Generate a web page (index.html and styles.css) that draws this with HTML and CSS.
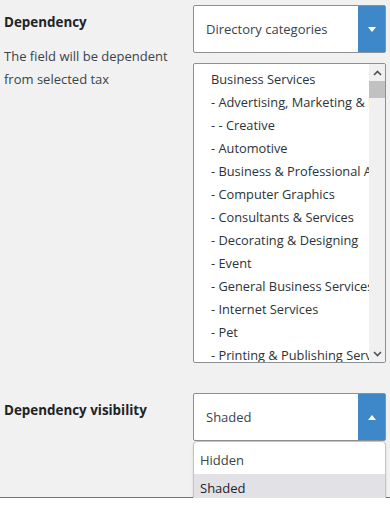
FILE: index.html
```html
<!DOCTYPE html>
<html lang="en">
<head>
    <meta charset="UTF-8" />
    <meta name="viewport" content="width=device-width, initial-scale=1.0"/>
    <title>Field Dependency</title>
    <link rel="stylesheet" href="styles.css">
</head>
<body>
<div class="panel">
    <div class="row">
        <div class="label">
            <h4>Dependency</h4>
            <p>The field will be dependent from selected tax</p>
        </div>
        <div class="field">
            <div class="select">
                <span class="select-value">Directory categories</span>
                <span class="select-btn"><i class="caret down"></i></span>
            </div>

            <div class="listbox">
                <ul class="listbox-items">
                    <li>Business Services</li>
                    <li>- Advertising, Marketing &amp; PR</li>
                    <li>- - Creative</li>
                    <li>- Automotive</li>
                    <li>- Business &amp; Professional Associations</li>
                    <li>- Computer Graphics</li>
                    <li>- Consultants &amp; Services</li>
                    <li>- Decorating &amp; Designing</li>
                    <li>- Event</li>
                    <li>- General Business Services</li>
                    <li>- Internet Services</li>
                    <li>- Pet</li>
                    <li>- Printing &amp; Publishing Services</li>
                </ul>
                <div class="scrollbar">
                    <span class="scroll-arrow">
                        <svg width="9" height="6" viewBox="0 0 9 6"><path d="M1 5 L4.5 1.5 L8 5" fill="none" stroke="#505050" stroke-width="1.6"/></svg>
                    </span>
                    <span class="scroll-thumb"></span>
                    <span class="scroll-track"></span>
                    <span class="scroll-arrow">
                        <svg width="9" height="6" viewBox="0 0 9 6"><path d="M1 1 L4.5 4.5 L8 1" fill="none" stroke="#505050" stroke-width="1.6"/></svg>
                    </span>
                </div>
            </div>
        </div>
    </div>

    <div class="row row-last">
        <div class="label">
            <h4>Dependency visibility</h4>
        </div>
        <div class="field">
            <div class="select open">
                <span class="select-value">Shaded</span>
                <span class="select-btn"><i class="caret up"></i></span>

                <!-- open dropdown -->
                <ul class="dropdown">
                    <li>Hidden</li>
                    <li class="selected">Shaded</li>
                </ul>
            </div>
        </div>
    </div>
</div>
</body>
</html>
```

FILE: styles.css
```css
body {
    margin: 0;
    font-family: "Open Sans", Arial, sans-serif;
    font-size: 13px;
    color: #2c3338;
    background-color: #ffffff;
}

.panel {
    background-color: #f1f1f1;
    border-bottom: 1px solid #3582c4;
    padding: 5px 4px 56px 4px;
    display: flex;
    flex-direction: column;
    gap: 30px;
}

.row {
    display: grid;
    grid-template-columns: 189px minmax(0, 1fr);
}

.label {
    padding-top: 6px;
    line-height: 23px;
}

.label h4 {
    margin: 0;
    font-size: 13.4px;
    font-weight: bold;
    color: #1d2327;
}

.label p {
    margin: 11px 0 0 0;
    color: #3c434a;
}

.field {
    position: relative;
    min-width: 0;
}

.select {
    position: relative;
    display: flex;
    height: 48px;
    box-sizing: border-box;
    border: 1px solid #8c8f94;
    border-radius: 2px;
    background-color: #fff;
    font-size: 13px;
}

.select-value {
    flex: 1;
    display: flex;
    align-items: center;
    padding-left: 12px;
    color: #3c434a;
}

.select-btn {
    width: 27px;
    background-color: #3e88c9;
    display: flex;
    align-items: center;
    justify-content: center;
}

.caret {
    width: 0;
    height: 0;
    border-left: 4px solid transparent;
    border-right: 4px solid transparent;
}

.caret.down {
    border-top: 5px solid #fff;
}

.caret.up {
    border-bottom: 5px solid #fff;
}

.listbox {
    margin-top: 10px;
    height: 300px;
    box-sizing: border-box;
    border: 1px solid #8c8f94;
    border-radius: 2px;
    background-color: #fff;
    display: flex;
    overflow: hidden;
}

.listbox-items {
    flex: 1;
    min-width: 0;
    list-style: none;
    margin: 0;
    padding: 4px 0 0 17px;
    overflow: hidden;
    line-height: 23px;
    font-size: 12.8px;
    color: #2c3338;
}

.listbox-items li {
    white-space: nowrap;
}

.scrollbar {
    flex: none;
    width: 16px;
    background-color: #f0f0f0;
    display: flex;
    flex-direction: column;
}

.scroll-arrow {
    height: 17px;
    display: flex;
    align-items: center;
    justify-content: center;
}

.scroll-thumb {
    height: 17px;
    background-color: #c1c1c1;
}

.scroll-track {
    flex: 1;
}

.dropdown {
    position: absolute;
    top: calc(100% + 1px);
    left: -1px;
    right: -1px;
    margin: 0;
    padding: 4px 0 3px 0;
    list-style: none;
    background-color: #fff;
    border: 1px solid #c3c4c7;
    border-radius: 4px;
    box-shadow: 0 1px 2px rgba(0, 0, 0, 0.15);
    z-index: 10;
}

.dropdown li {
    height: 28px;
    line-height: 28px;
    padding-left: 6px;
    color: #3c434a;
}

.dropdown li.selected {
    background-color: #e1e1e6;
    color: #1d2327;
}
```
